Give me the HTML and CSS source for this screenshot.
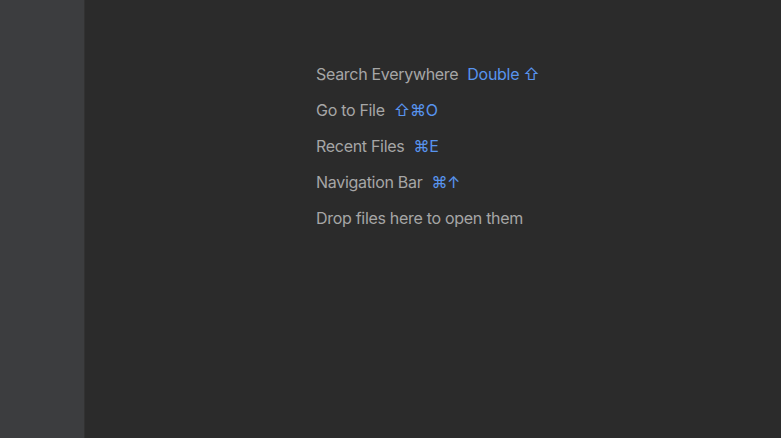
FILE: index.html
```html
<!DOCTYPE html>
<html>
<head>
<meta charset="utf-8">
<link rel="stylesheet" href="styles.css">
</head>
<body>
<div class="app">
  <aside class="sidebar"></aside>
  <main class="editor">
    <ul class="hints">
      <li class="hint">Search Everywhere<span class="key">Double ⇧</span></li>
      <li class="hint">Go to File<span class="key">⇧⌘O</span></li>
      <li class="hint">Recent Files<span class="key">⌘E</span></li>
      <li class="hint">Navigation Bar<span class="key">⌘↑</span></li>
      <li class="hint">Drop files here to open them</li>
    </ul>
  </main>
</div>
</body>
</html>
```
FILE: styles.css
```css
html, body {
  margin: 0;
  padding: 0;
  height: 100%;
}
body {
  background: #2b2b2b;
  font-family: Inter, "Liberation Sans", sans-serif;
}
.app {
  display: flex;
  height: 100%;
}
.sidebar {
  width: 84px;
  flex: none;
  background: #3c3d3f;
  border-right: 1px solid #323232;
}
.editor {
  flex: 1;
  background: #2b2b2b;
}
.hints {
  list-style: none;
  margin: 0;
  padding: 62px 0 0 231px;
  display: flex;
  flex-direction: column;
  gap: 12px;
}
.hint {
  display: flex;
  align-items: center;
  height: 24px;
  font-size: 16px;
  letter-spacing: -0.3px;
  color: #a6a6a6;
  white-space: pre;
}
.key {
  color: #5894ee;
  margin-left: 9px;
}
```
